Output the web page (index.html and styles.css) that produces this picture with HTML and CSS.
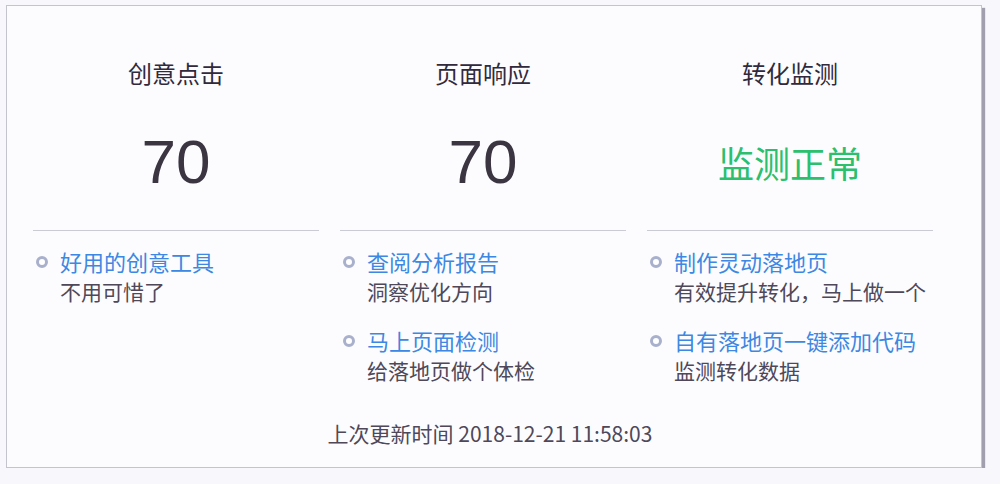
FILE: index.html
```html
<!DOCTYPE html>
<html lang="zh-CN">
<head>
    <meta charset="UTF-8">
    <meta name="viewport" content="width=device-width, initial-scale=1.0">
    <title>监测概览</title>
    <link rel="stylesheet" href="styles.css">
</head>
<body>
    <div class="card">
        <div class="columns">
            <div class="column">
                <div class="col-title">创意点击</div>
                <div class="col-value">70</div>
                <ul class="tips">
                    <li class="tip">
                        <span class="dot"></span>
                        <div class="tip-body">
                            <a class="tip-link" href="#">好用的创意工具</a>
                            <div class="tip-desc">不用可惜了</div>
                        </div>
                    </li>
                </ul>
            </div>
            <div class="column">
                <div class="col-title">页面响应</div>
                <div class="col-value">70</div>
                <ul class="tips">
                    <li class="tip">
                        <span class="dot"></span>
                        <div class="tip-body">
                            <a class="tip-link" href="#">查阅分析报告</a>
                            <div class="tip-desc">洞察优化方向</div>
                        </div>
                    </li>
                    <li class="tip">
                        <span class="dot"></span>
                        <div class="tip-body">
                            <a class="tip-link" href="#">马上页面检测</a>
                            <div class="tip-desc">给落地页做个体检</div>
                        </div>
                    </li>
                </ul>
            </div>
            <div class="column">
                <div class="col-title">转化监测</div>
                <div class="col-value status-ok">监测正常</div>
                <ul class="tips">
                    <li class="tip">
                        <span class="dot"></span>
                        <div class="tip-body">
                            <a class="tip-link" href="#">制作灵动落地页</a>
                            <div class="tip-desc">有效提升转化，马上做一个</div>
                        </div>
                    </li>
                    <li class="tip">
                        <span class="dot"></span>
                        <div class="tip-body">
                            <a class="tip-link" href="#">自有落地页一键添加代码</a>
                            <div class="tip-desc">监测转化数据</div>
                        </div>
                    </li>
                </ul>
            </div>
        </div>
        <div class="updated">上次更新时间 2018-12-21 11:58:03</div>
    </div>
</body>
</html>
```

FILE: styles.css
```css
:root {
    --page-bg: #f8f8fc;
    --card-bg: #fcfcff;
    --card-border: #c4c4cc;
    --title-color: #302a3c;
    --value-color: #3a3541;
    --link-color: #3d88e2;
    --desc-color: #4e4859;
    --ok-color: #2bbf6e;
    --line-color: #c9ccd4;
}

* {
    margin: 0;
    padding: 0;
    box-sizing: border-box;
}

body {
    background-color: var(--page-bg);
    font-family: "Noto Sans CJK SC", "Liberation Sans", sans-serif;
    padding: 5px 0 0 6px;
}

.card {
    width: 976px;
    height: 463px;
    background-color: var(--card-bg);
    border: 1px solid var(--card-border);
    box-shadow: 3px 3px 1px rgba(90, 86, 110, 0.55);
    padding-top: 52px;
}

.columns {
    display: grid;
    grid-template-columns: repeat(3, 286px);
    column-gap: 21px;
    padding-left: 26px;
    align-items: start;
}

.col-title {
    text-align: center;
    font-size: 24px;
    line-height: 30px;
    color: var(--title-color);
}

.col-value {
    margin-top: 39px;
    height: 70px;
    text-align: center;
    font-family: "Liberation Sans", "Noto Sans CJK SC", sans-serif;
    font-size: 62px;
    line-height: 70px;
    color: var(--value-color);
}

.col-value.status-ok {
    font-family: "Noto Sans CJK SC", sans-serif;
    font-size: 36px;
    color: var(--ok-color);
}

.tips {
    list-style: none;
    margin-top: 33px;
    border-top: 1px solid var(--line-color);
    padding-top: 15px;
}

.tip {
    display: flex;
    align-items: flex-start;
    gap: 12px;
    padding-left: 3px;
}

.tip + .tip {
    margin-top: 19px;
}

.dot {
    flex: none;
    width: 12px;
    height: 12px;
    margin-top: 10px;
    border-radius: 50%;
    border: 3.5px solid #a9b0cc;
    background-color: #ffffff;
}

.tip-link {
    display: block;
    font-size: 22px;
    line-height: 30px;
    color: var(--link-color);
    text-decoration: none;
}

.tip-desc {
    font-size: 21px;
    line-height: 30px;
    color: var(--desc-color);
}

.updated {
    margin-top: 33px;
    text-align: center;
    font-size: 21px;
    line-height: 30px;
    color: var(--desc-color);
    padding-right: 8px;
}
```
